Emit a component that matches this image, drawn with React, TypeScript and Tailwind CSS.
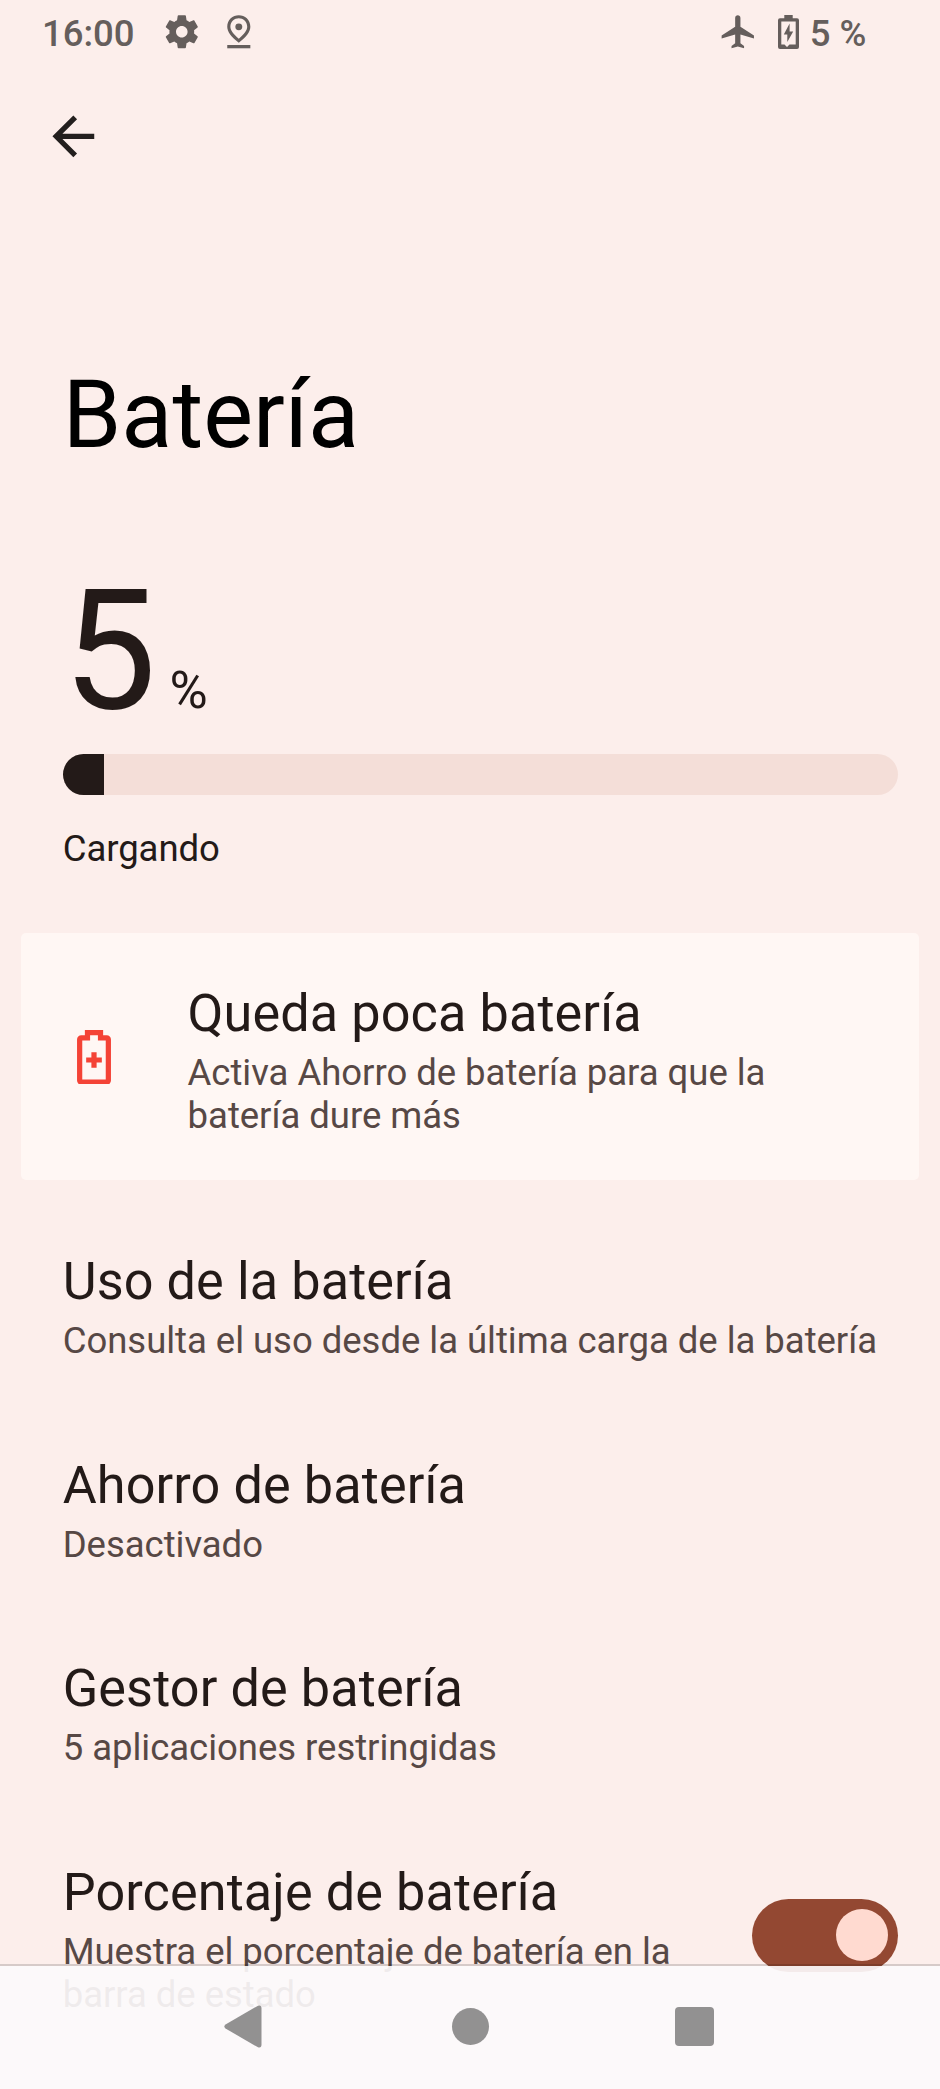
import React from "react";

function GearIcon() {
  return (
    <svg viewBox="0 0 24 24" className="size-[39.6px]" fill="currentColor">
      <path d="M19.43 12.98c.04-.32.07-.64.07-.98s-.03-.66-.07-.98l2.11-1.65c.19-.15.24-.42.12-.64l-2-3.46c-.12-.22-.39-.3-.61-.22l-2.49 1c-.52-.4-1.08-.73-1.69-.98l-.38-2.65C14.46 2.18 14.25 2 14 2h-4c-.25 0-.46.18-.49.42l-.38 2.65c-.61.25-1.17.59-1.69.98l-2.49-1c-.23-.09-.49 0-.61.22l-2 3.46c-.13.22-.07.49.12.64l2.11 1.65c-.04.32-.07.65-.07.98s.03.66.07.98l-2.11 1.65c-.19.15-.24.42-.12.64l2 3.46c.12.22.39.3.61.22l2.49-1c.52.4 1.08.73 1.69.98l.38 2.65c.03.24.24.42.49.42h4c.25 0 .46-.18.49-.42l.38-2.65c.61-.25 1.17-.59 1.69-.98l2.49 1c.23.09.49 0 .61-.22l2-3.46c.12-.22.07-.49-.12-.64l-2.11-1.65zM12 15.5c-1.93 0-3.5-1.57-3.5-3.5s1.57-3.5 3.5-3.5 3.5 1.57 3.5 3.5-1.57 3.5-3.5 3.5z" />
    </svg>
  );
}

function PinIcon() {
  return (
    <svg viewBox="0 0 24 24" className="size-[39.6px]" fill="currentColor">
      <path d="M12 3.8c2.600 0 5.100 1.900 5.100 5.200 0 2.100-1.700 4.400-5.100 7.200-3.400-2.800-5.100-5.100-5.100-7.200 0-3.300 2.500-5.200 5.100-5.200M12 2C8.300 2 5 4.700 5 9c0 3 2.400 6.200 7 9.700 4.600-3.500 7-6.700 7-9.700 0-4.300-3.300-7-7-7z" />
      <circle cx="12" cy="9" r="2.1" />
      <path d="M5 20h14v2H5z" />
    </svg>
  );
}

function AirplaneIcon() {
  return (
    <svg viewBox="0 0 24 24" className="size-[39.6px]" fill="currentColor">
      <path d="M21.800 16v-1.700L13.600 9V3.600C13.600 2.700 12.900 2 12 2s-1.600.7-1.600 1.600V9L2.200 14.300V16l8.200-2.400V19l-2.200 1.600V22l3.800-1.100 3.800 1.100v-1.400L13.600 19v-5.400z" />
    </svg>
  );
}

function ChargingIcon() {
  return (
    <svg viewBox="0 0 21 34" className="h-[34px] w-[21px]" fill="currentColor">
      <path
        fillRule="evenodd"
        d="M6.300 0H14.700V3.300H19a2 2 0 0 1 2 2V32a2 2 0 0 1-2 2H2a2 2 0 0 1-2-2V5.300a2 2 0 0 1 2-2H6.300zM3.300 6.600V29.500H6.500L9 32l2.500-2.500H17.700V6.600z"
      />
      <path d="M11.600 8.500 5.800 19.500H9.300V27L15.200 16.500H11.600z" />
    </svg>
  );
}

function LowBatteryIcon() {
  return (
    <svg viewBox="0 0 13 21" className="h-[54.8px] w-[34px]" fill="#f44336">
      <path
        fillRule="evenodd"
        d="M3 0H10V2H11.400A1.600 1.600 0 0 1 13 3.600V19.400A1.600 1.600 0 0 1 11.400 21H1.600A1.600 1.600 0 0 1 0 19.400V3.600A1.600 1.600 0 0 1 1.600 2H3zM5 2V4H2V19H11V4H8V2z"
      />
      <path d="M5.500 8.500h2v2h2v2h-2v2h-2v-2h-2v-2h2z" />
    </svg>
  );
}

function Label({ title, children }: { title: string; children: React.ReactNode }) {
  return (
    <div className="whitespace-nowrap">
      <div className="text-[52.2px] leading-[62px] tracking-[0.1px] text-[#231a18]">{title}</div>
      <div className="mt-[6px] text-[36.5px] leading-[43px] tracking-[-0.03px] text-[#574845]">{children}</div>
    </div>
  );
}

const entries = [
  { title: "Uso de la batería", detail: "Consulta el uso desde la última carga de la batería" },
  { title: "Ahorro de batería", detail: "Desactivado" },
  { title: "Gestor de batería", detail: "5 aplicaciones restringidas" },
];

export default function App() {
  return (
    <div className="relative h-[2089px] w-[940px] overflow-hidden bg-[#fceeeb] font-['Roboto',sans-serif]">
      <header className="flex h-[63px] items-center text-[36.5px] font-medium text-[#655e5c]">
        <span className="ml-[42px] w-[120px] leading-[62px] pt-[4px]">16:00</span>
        <GearIcon />
        <div className="ml-[17px]">
          <PinIcon />
        </div>
        <div className="ml-[460px]">
          <AirplaneIcon />
        </div>
        <div className="ml-[20px]">
          <ChargingIcon />
        </div>
        <span className="ml-[11px] leading-[62px] pt-[4px] whitespace-pre">5 %</span>
      </header>

      <main className="flex flex-col">
        <button className="mt-[41.500px] ml-[42px] size-[62.700px]" aria-label="Atrás">
          <svg viewBox="0 0 24 24" fill="#231f1e">
            <path d="M20 11H7.830l5.590-5.590L12 4l-8 8 8 8 1.410-1.410L7.830 13H20z" />
          </svg>
        </button>

        <h1 className="mt-[191.500px] ml-[62.700px] h-[112px] text-[94px] leading-[112px] text-black">Batería</h1>

        <section className="mr-[41.700px] ml-[62.700px] mt-[82px]">
          <div className="flex h-[201px] items-baseline leading-[196px] text-[#231a18]">
            <span className="text-[167px]">5</span>
            <span className="ml-[13px] text-[52.200px]">%</span>
          </div>
          <div className="h-[41.800px] overflow-hidden rounded-full bg-[#f4ded8]">
            <div className="h-full w-[5%] bg-[#231a18]" />
          </div>
          <div className="mt-[31.500px] text-[36.500px] leading-[43px] tracking-[-0.05px] text-[#231a18]">Cargando</div>
        </section>

        <section className="mx-[20.600px] mt-[63.500px] flex h-[247px] items-center rounded-[5px] bg-[#fff7f4]">
          <div className="ml-[56px] w-[111px]">
            <LowBatteryIcon />
          </div>
          <div className="pt-[6px]">
            <Label title="Queda poca batería">
              Activa Ahorro de batería para que la
              <br />
              batería dure más
            </Label>
          </div>
        </section>

        <section className="mt-[70.500px] ml-[62.700px]">
          {entries.map((entry) => (
            <div key={entry.title} className="h-[203.700px]">
              <Label title={entry.title}>{entry.detail}</Label>
            </div>
          ))}
          <div className="flex">
            <div className="w-[689.300px]">
              <Label title="Porcentaje de batería">
                Muestra el porcentaje de batería en la
                <br />
                barra de estado
              </Label>
            </div>
            <div className="mt-[36.500px] flex h-[73.300px] w-[146.300px] items-center justify-end rounded-full bg-[#934832] pr-[10.200px]">
              <div className="size-[52.500px] rounded-full bg-[#ffdad0]" />
            </div>
          </div>
        </section>
      </main>

      <nav className="absolute inset-x-0 bottom-0 h-[125px]">
        <div className="h-[2px] bg-black/15" />
        <div className="flex h-[123px] items-center bg-[#fcfafb]/92 pb-[2.500px]">
          <svg viewBox="0 0 38 43" className="ml-[224px] h-[43px] w-[38px]" fill="#929191">
            <path d="M34 .700 1.500 19.500Q-.800 21.500 1.500 23.500L34 42.300Q37.500 43.300 37.500 39.500V3.500Q37.500-.300 34 .700z" />
          </svg>
          <div className="ml-[189.500px] size-[37px] rounded-full bg-[#929191]" />
          <div className="ml-[186.500px] size-[39px] rounded-[4px] bg-[#929191]" />
        </div>
      </nav>
    </div>
  );
}
